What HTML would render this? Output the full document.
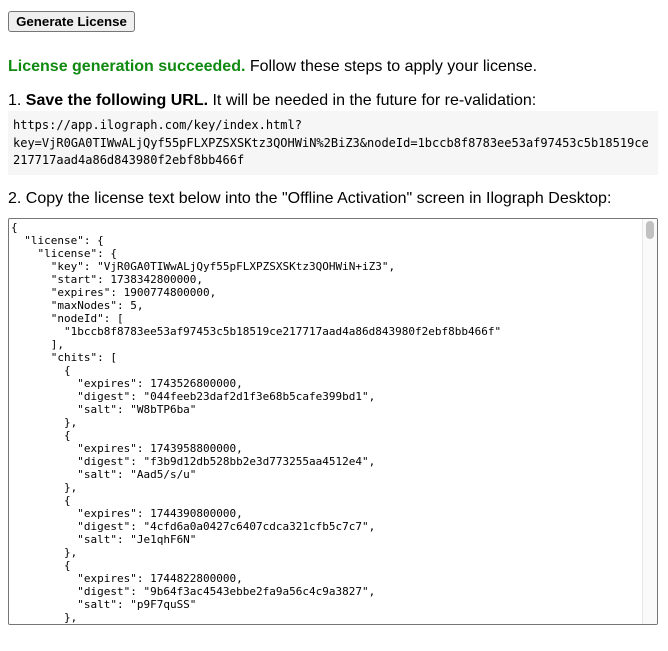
<!DOCTYPE html>
<html><head><meta charset="utf-8"><style>
body{margin:0;background:#fff;font-family:"Liberation Sans",Arial,sans-serif;font-size:16px;color:#000;}
.abs{position:absolute;white-space:nowrap;}
.btn{left:8px;top:11px;width:125px;height:19px;border:1px solid #767676;border-radius:3px;background:#efefef;font-size:13.3px;font-weight:bold;text-align:center;line-height:19px;}
.pre{left:8px;top:111px;width:650px;height:64px;background:#f6f6f6;font-family:"DejaVu Sans Mono",monospace;font-size:12px;line-height:17.5px;padding:6px 0 0 5px;box-sizing:border-box;white-space:pre;}
.ta{left:8px;top:218px;width:650px;height:407px;border:1px solid #767676;box-sizing:border-box;overflow:hidden;border-radius:2px;}
.ta pre{margin:0;padding:2px 0 0 2px;font-family:"DejaVu Sans Mono",monospace;font-size:11px;line-height:13px;}
.sb{position:absolute;right:0;top:0;width:14px;height:100%;background:#fafafa;border-left:1px solid #e8e8e8;}
.th{position:absolute;left:3px;top:2px;width:8px;height:18px;background:#c1c1c1;border-radius:4px;}
</style></head><body>
<div class="abs btn">Generate License</div>
<div class="abs" style="left:8px;top:58px;"><b style="color:#108a10">License generation succeeded.</b> Follow these steps to apply your license.</div>
<div class="abs" style="left:8px;top:92px;">1. <b>Save the following URL.</b> It will be needed in the future for re-validation:</div>
<div class="abs pre">https://app.ilograph.com/key/index.html?
key=VjR0GA0TIWwALjQyf55pFLXPZSXSKtz3QOHWiN%2BiZ3&amp;nodeId=1bccb8f8783ee53af97453c5b18519ce
217717aad4a86d843980f2ebf8bb466f</div>
<div class="abs" style="left:8px;top:190px;">2. Copy the license text below into the "Offline Activation" screen in Ilograph Desktop:</div>
<div class="abs ta"><pre>{
  "license": {
    "license": {
      "key": "VjR0GA0TIWwALjQyf55pFLXPZSXSKtz3QOHWiN+iZ3",
      "start": 1738342800000,
      "expires": 1900774800000,
      "maxNodes": 5,
      "nodeId": [
        "1bccb8f8783ee53af97453c5b18519ce217717aad4a86d843980f2ebf8bb466f"
      ],
      "chits": [
        {
          "expires": 1743526800000,
          "digest": "044feeb23daf2d1f3e68b5cafe399bd1",
          "salt": "W8bTP6ba"
        },
        {
          "expires": 1743958800000,
          "digest": "f3b9d12db528bb2e3d773255aa4512e4",
          "salt": "Aad5/s/u"
        },
        {
          "expires": 1744390800000,
          "digest": "4cfd6a0a0427c6407cdca321cfb5c7c7",
          "salt": "Je1qhF6N"
        },
        {
          "expires": 1744822800000,
          "digest": "9b64f3ac4543ebbe2fa9a56c4c9a3827",
          "salt": "p9F7quSS"
        },
        {</pre><div class="sb"><div class="th"></div></div></div>
</body></html>
